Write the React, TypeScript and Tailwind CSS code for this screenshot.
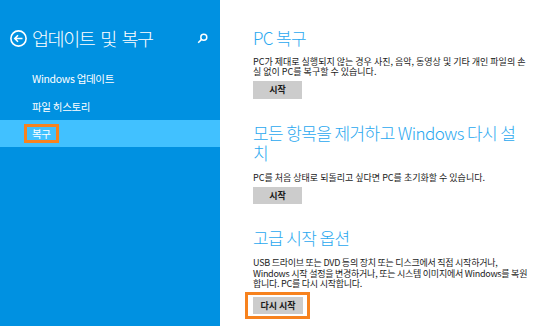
export default function App() {
  return (
    <div
      className="flex w-[534px] h-[326px] overflow-hidden"
      style={{ fontFamily: '"Noto Sans CJK KR", "Noto Sans", sans-serif' }}
    >
      {/* Left nav */}
      <aside className="w-[220px] shrink-0 bg-[#0091e1] text-white">
        <div className="flex items-center h-[18px] mt-[29px] pl-[10px] pr-[12px]">
          <svg width="17" height="17" viewBox="0 0 17 17" fill="none" stroke="white" strokeWidth="1.6">
            <circle cx="8.5" cy="8.5" r="7.6" />
            <path d="M12.5 8.5H5M8 5.2L4.8 8.5L8 11.8" />
          </svg>
          <span className="ml-[5px] text-[18.5px] leading-none font-light tracking-[-1.4px] [word-spacing:3px]">업데이트 및 복구</span>
          <svg className="ml-auto" width="11" height="11" viewBox="0 0 11 11" fill="none" stroke="white" strokeWidth="1.5">
            <circle cx="6.8" cy="4.2" r="3" />
            <path d="M4.6 6.4L1.2 9.8" />
          </svg>
        </div>
        <nav className="mt-[18px] text-[10.5px] tracking-[-0.3px]">
          <div className="h-[28px] flex items-center pl-[32px]">Windows 업데이트</div>
          <div className="h-[27px] flex items-center pl-[32px]">파일 히스토리</div>
          <div className="h-[27px] flex items-center pl-[24px] bg-[#41c1ff]">
            <span className="border-[3px] border-[#f7821e] px-[5px] leading-[13px]">복구</span>
          </div>
        </nav>
      </aside>

      {/* Right content */}
      <main className="flex-1 bg-white pl-[33px] pr-[2px] text-[#1a1a1a]">
        <h2 className="mt-[28px] text-[17px] leading-[20px] font-light text-[#2aa8ef] tracking-[-0.6px]">PC 복구</h2>
        <p className="mt-[9px] pr-[4px] text-[9px] leading-[10px]">
          PC가 제대로 실행되지 않는 경우 사진, 음악, 동영상 및 기타 개인 파일의 손실 없이 PC를 복구할 수 있습니다.
        </p>
        <button className="block mt-[4px] w-[49px] h-[18px] bg-[#cccccc] text-[9px] font-bold">시작</button>

        <h2 className="mt-[24px] pr-[4px] text-[17px] leading-[20px] font-light text-[#2aa8ef] tracking-[-0.6px]">
          모든 항목을 제거하고 Windows 다시 설치
        </h2>
        <p className="mt-[10px] text-[9px] leading-[10px]">
          PC를 처음 상태로 되돌리고 싶다면 PC를 초기화할 수 있습니다.
        </p>
        <button className="block mt-[4px] w-[49px] h-[17px] bg-[#cccccc] text-[9px] font-bold">시작</button>

        <h2 className="mt-[24px] text-[17px] leading-[20px] font-light text-[#2aa8ef] tracking-[-0.6px]">고급 시작 옵션</h2>
        <p className="mt-[10px] text-[9px] leading-[10.5px] tracking-[-0.25px]">
          USB 드라이브 또는 DVD 등의 장치 또는 디스크에서 직접 시작하거나, Windows 시작 설정을 변경하거나, 또는 시스템 이미지에서 Windows를 복원합니다. PC를 다시 시작합니다.
        </p>
        <div className="-mt-[2px] -ml-[8px] inline-block border-[3px] border-[#f7821e] pl-[5px] pr-[4px] py-[2px]">
          <button className="block w-[50px] h-[17px] bg-[#cccccc] text-[9px] font-bold">다시 시작</button>
        </div>
      </main>
    </div>
  );
}
